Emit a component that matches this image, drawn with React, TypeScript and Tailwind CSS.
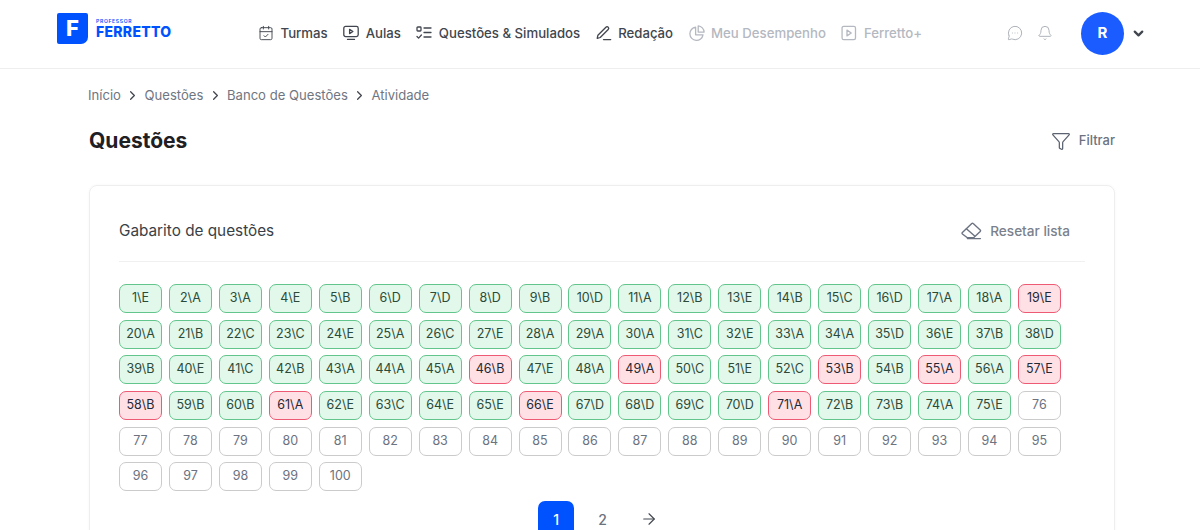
import {
  ArrowRight,
  Bell,
  CalendarCheck,
  ChevronDown,
  ChevronRight,
  Funnel,
  MessageCircleMore,
} from "lucide-react";
import type { ReactNode } from "react";

const answers =
  "EAAEBDDDBDABEBCDAAE" +
  "ABCCEACEAAACEAADEBD" +
  "BECBAAABEAACECBBAAE" +
  "BBBAECEEEDDCDABBAE";
const wrong = [19, 46, 49, 53, 55, 57, 58, 61, 66, 71];
const numbers = Array.from({ length: 100 }, (_, i) => i + 1);

function AulasIcon() {
  return (
    <svg width="16" height="16" viewBox="0 0 16 16" fill="none" stroke="currentColor" strokeWidth="1.3" strokeLinejoin="round" strokeLinecap="round">
      <rect x="0.8" y="1.4" width="14.4" height="10.2" rx="1.8" />
      <path d="M6.6 4.4v4.2l3.3-2.1z" />
      <path d="M4.5 14.4h7" />
    </svg>
  );
}

function QuestoesIcon() {
  return (
    <svg width="16" height="16" viewBox="0 0 16 16" fill="none" stroke="currentColor" strokeWidth="1.3" strokeLinejoin="round" strokeLinecap="round">
      <rect x="1" y="2" width="4" height="4" rx="0.8" />
      <path d="M1 11.5l1.6 1.6L5.4 10" />
      <path d="M8 3h7M8 7.5h7M8 12h7" />
    </svg>
  );
}

function RedacaoIcon() {
  return (
    <svg width="16" height="16" viewBox="0 0 16 16" fill="none" stroke="currentColor" strokeWidth="1.3" strokeLinejoin="round" strokeLinecap="round">
      <path d="M1.2 13.4l.7-3.2 8-8a1.6 1.6 0 0 1 2.3 2.3l-8 8z" />
      <path d="M7.5 14.6h7.2" />
    </svg>
  );
}

function PieIcon() {
  return (
    <svg width="16" height="16" viewBox="0 0 16 16" fill="none" stroke="currentColor" strokeWidth="1.3" strokeLinejoin="round" strokeLinecap="round">
      <path d="M6.6 2.2a6.6 6.6 0 1 0 7.4 7.6H6.6z" />
      <path d="M9.2 0.9a6.4 6.4 0 0 1 5.9 6.2H9.2z" />
    </svg>
  );
}

function PlayBoxIcon() {
  return (
    <svg width="16" height="16" viewBox="0 0 15 15" fill="none" stroke="currentColor" strokeWidth="1.2" strokeLinejoin="round">
      <rect x="1" y="1.2" width="12.6" height="12.6" rx="1.6" />
      <path d="M5.6 4.8v5.4l4-2.7z" />
    </svg>
  );
}

function EraserIcon() {
  return (
    <svg width="21" height="18" viewBox="0 0 21 18" fill="none" stroke="#6b7280" strokeWidth="1.4" strokeLinejoin="round" strokeLinecap="round">
      <path d="M1.4 10.6 10.8 1.6a1 1 0 0 1 1.4 0l7 6.4a1 1 0 0 1 0 1.4l-6.6 6.4H6.4l-5-3.8a1 1 0 0 1 0-1.4z" />
      <path d="M5.4 6.8l8 7" />
      <path d="M6.4 16.6h13" />
    </svg>
  );
}

function NavItem({ icon, label, muted }: { icon: ReactNode; label: string; muted?: boolean }) {
  return (
    <a className={`flex items-center gap-[6.5px] ${muted ? "text-[#b4b8c0]" : "text-[#41464e]"}`}>
      {icon}
      <span className="text-[13.2px] font-medium">{label}</span>
    </a>
  );
}

function QuestionCell({ n }: { n: number }) {
  const answer = answers[n - 1];
  let tone = "border-[#cbcbcb] bg-white text-[#6b7280]";
  if (answer) {
    tone = wrong.includes(n)
      ? "border-[#ee5a73] bg-[#ffe1e5] text-[#1f2937]"
      : "border-[#62c58c] bg-[#e2f8ea] text-[#2b4a3a]";
  }
  return (
    <div className={`flex h-[29px] w-[43px] items-center justify-center rounded-[7px] border text-[12.5px] ${tone}`}>
      {answer ? `${n}\\${answer}` : n}
    </div>
  );
}

export default function App() {
  return (
    <div className="h-screen overflow-hidden bg-white font-['Inter','Liberation_Sans',sans-serif]">
      <header className="flex h-[69px] items-center border-b border-[#eeeeee] pb-[2px] pl-[57px]">
        <div className="flex w-[201px] items-center gap-2 pb-[10px]">
          <div className="flex h-[31px] w-[31px] items-center justify-center rounded-[2px] rounded-br-[7px] bg-[#0052ff] text-[22px] font-extrabold text-white">
            F
          </div>
          <div className="flex flex-col">
            <span className="text-[5px] leading-[7px] font-semibold tracking-[0.14em] text-[#0052ff]">PROFESSOR</span>
            <span className="text-[14px] leading-[14px] font-extrabold tracking-[0.02em] text-[#0052ff]">FERRETTO</span>
          </div>
        </div>
        <nav className="flex items-center gap-[15.5px] pt-[1px]">
          <NavItem icon={<CalendarCheck size={16} strokeWidth={1.4} />} label="Turmas" />
          <NavItem icon={<AulasIcon />} label="Aulas" />
          <NavItem icon={<QuestoesIcon />} label="Questões & Simulados" />
          <NavItem icon={<RedacaoIcon />} label="Redação" />
          <NavItem muted icon={<PieIcon />} label="Meu Desempenho" />
          <NavItem muted icon={<PlayBoxIcon />} label="Ferretto+" />
        </nav>
        <div className="ml-auto flex items-center pr-[54px]">
          <MessageCircleMore size={16} strokeWidth={1.4} className="text-[#a9adb5]" />
          <Bell size={16} strokeWidth={1.4} className="ml-[14px] text-[#a9adb5]" />
          <div className="ml-[28px] flex h-[43px] w-[43px] items-center justify-center rounded-full bg-[#1a5cff] text-[15px] font-bold text-white">
            R
          </div>
          <ChevronDown size={15} strokeWidth={3.6} className="ml-[7px] text-[#41464e]" />
        </div>
      </header>

      <main className="px-[85px] pt-[17px]">
        <div className="flex items-center gap-[4.3px] pl-[3px] text-[13.1px] text-[#6f7682]">
          <span>Início</span>
          <ChevronRight size={15} className="text-[#41464e]" />
          <span>Questões</span>
          <ChevronRight size={15} className="text-[#41464e]" />
          <span>Banco de Questões</span>
          <ChevronRight size={15} className="text-[#41464e]" />
          <span>Atividade</span>
        </div>

        <div className="mt-[18px] flex h-[34px] items-center justify-between pl-[4px]">
          <h1 className="text-[21px] font-bold text-[#1f2024]">Questões</h1>
          <button className="flex items-center gap-2 text-[13px] font-medium text-[#6b7280]">
            <Funnel size={20} strokeWidth={1.5} className="text-[#5b6270]" />
            Filtrar
          </button>
        </div>

        <section className="mt-[27px] ml-[4px] h-[400px] rounded-lg border border-[#eeeeee] px-[29px] shadow-[0_0_3px_rgba(0,0,0,0.04)]">
          <div className="flex h-[76px] items-center justify-between border-b border-[#f0f0f0] pt-[16px]">
            <h2 className="text-[15.3px] text-[#3a3f47]">Gabarito de questões</h2>
            <button className="flex items-center gap-2 pr-[15px] text-[13.6px] font-medium text-[#7b818c]">
              <EraserIcon />
              Resetar lista
            </button>
          </div>

          <div className="mt-[22.5px] flex flex-wrap gap-x-[6.94px] gap-y-[6.6px]">
            {numbers.map((n) => (
              <QuestionCell key={n} n={n} />
            ))}
          </div>

          <div className="mt-[10px] flex items-center justify-center pr-[8px]">
            <span className="flex h-[36px] w-[36px] items-center justify-center rounded-[7px] bg-[#0052ff] text-[14px] font-medium text-white">
              1
            </span>
            <span className="ml-[24px] text-[14px] font-medium text-[#6b7280]">2</span>
            <ArrowRight size={18} strokeWidth={1.5} className="ml-[33px] text-[#41464e]" />
          </div>
        </section>
      </main>
    </div>
  );
}
